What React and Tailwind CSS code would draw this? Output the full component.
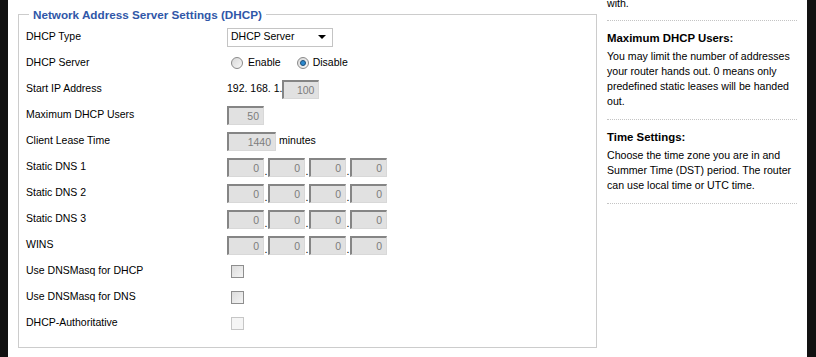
import React from "react";

const font = { fontFamily: '"Liberation Sans", Arial, sans-serif' };

const Row = ({ label, children }) => (
  <div className="flex h-[26px] items-center">
    <div className="w-[201px] text-[10.5px] text-black">{label}</div>
    <div className="flex items-center">{children}</div>
  </div>
);

const Field = ({ value, w = "w-[37px]" }) => (
  <div
    className={`${w} h-[19px] border-t-2 border-l-2 border-r border-b border-t-[#858585] border-l-[#858585] border-r-[#d8d8d8] border-b-[#d8d8d8] bg-[#e1e1e1] pr-[4px] text-right text-[10.5px] leading-[16px] text-[#7d7d7d]`}
  >
    {value}
  </div>
);

const Ip = () => (
  <div className="flex items-end">
    <Field value="0" />
    <span className="w-[4px] text-center text-[10.5px] leading-[12px]">.</span>
    <Field value="0" />
    <span className="w-[4px] text-center text-[10.5px] leading-[12px]">.</span>
    <Field value="0" />
    <span className="w-[4px] text-center text-[10.5px] leading-[12px]">.</span>
    <Field value="0" />
  </div>
);

const Radio = ({ checked }) => (
  <span className="flex h-[12px] w-[12px] items-center justify-center rounded-full border border-[#8a8a8a] bg-gradient-to-br from-[#d8d8d8] to-[#f8f8f8]">
    {checked && <span className="h-[6px] w-[6px] rounded-full border border-[#1d4f7a] bg-[#2c8ad0]" />}
  </span>
);

const Check = ({ disabled }) =>
  disabled ? (
    <span className="ml-[4px] block h-[13px] w-[13px] border border-[#c6c6c6] bg-[#f5f5f5]" />
  ) : (
    <span className="ml-[4px] block h-[13px] w-[13px] border border-[#8e8e8e] bg-gradient-to-br from-[#dcdcdc] to-[#f4f4f4]" />
  );

const Help = ({ title, lines }) => (
  <div className="border-b border-dotted border-[#c4c4c4] pt-[10px] pb-[10px]">
    <div className="mb-[3px] text-[11.4px] font-bold leading-[15px] text-black">{title}</div>
    <p className="whitespace-nowrap text-[10.6px] leading-[15px] text-black">
      {lines.map((l, i) => (
        <React.Fragment key={i}>
          {l}
          {i < lines.length - 1 && <br />}
        </React.Fragment>
      ))}
    </p>
  </div>
);

export default function App() {
  return (
    <div className="flex h-[357px] w-[816px] overflow-hidden bg-white" style={font}>
      <div className="w-[8px] shrink-0 bg-[#111111]" />

      <div className="ml-[10px] w-[579px] shrink-0">
        <fieldset className="mt-[7px] h-[341px] border border-[#cccccc] px-[7px] pt-[2px]">
          <legend className="ml-[3px] px-[4px] text-[11.7px] font-bold leading-[15px] text-[#3057a8]">
            Network Address Server Settings (DHCP)
          </legend>

          <Row label="DHCP Type">
            <div className="flex h-[19px] w-[106px] items-center justify-between border border-[#c4c4c4] bg-white pl-[3px] pr-[6px] text-[10.5px]">
              <span>DHCP Server</span>
              <span className="h-0 w-0 border-x-[4px] border-t-[4px] border-x-transparent border-t-black" />
            </div>
          </Row>

          <Row label="DHCP Server">
            <div className="ml-[4px] flex items-center text-[10.5px]">
              <Radio />
              <span className="ml-[5px]">Enable</span>
              <span className="ml-[16px]"><Radio checked /></span>
              <span className="ml-[4px]">Disable</span>
            </div>
          </Row>

          <Row label="Start IP Address">
            <span className="text-[10.5px]">192. 168. 1.</span>
            <Field value="100" />
          </Row>

          <Row label="Maximum DHCP Users">
            <Field value="50" />
          </Row>

          <Row label="Client Lease Time">
            <Field value="1440" w="w-[49px]" />
            <span className="ml-[3px] text-[10.5px]">minutes</span>
          </Row>

          <Row label="Static DNS 1"><Ip /></Row>
          <Row label="Static DNS 2"><Ip /></Row>
          <Row label="Static DNS 3"><Ip /></Row>
          <Row label="WINS"><Ip /></Row>

          <Row label="Use DNSMasq for DHCP"><Check /></Row>
          <Row label="Use DNSMasq for DNS"><Check /></Row>
          <Row label="DHCP-Authoritative"><Check disabled /></Row>
        </fieldset>
      </div>

      <div className="ml-[10px] w-[190px] shrink-0">
        <div className="-mt-[4px] border-b border-dotted border-[#c4c4c4] pb-[9px]">
          <p className="text-[10.6px] leading-[15px] text-black">with.</p>
        </div>
        <Help
          title="Maximum DHCP Users:"
          lines={[
            "You may limit the number of addresses",
            "your router hands out. 0 means only",
            "predefined static leases will be handed",
            "out.",
          ]}
        />
        <Help
          title="Time Settings:"
          lines={[
            "Choose the time zone you are in and",
            "Summer Time (DST) period. The router",
            "can use local time or UTC time.",
          ]}
        />
      </div>

      <div className="ml-[10px] flex-1 bg-[#111111]" />
    </div>
  );
}
